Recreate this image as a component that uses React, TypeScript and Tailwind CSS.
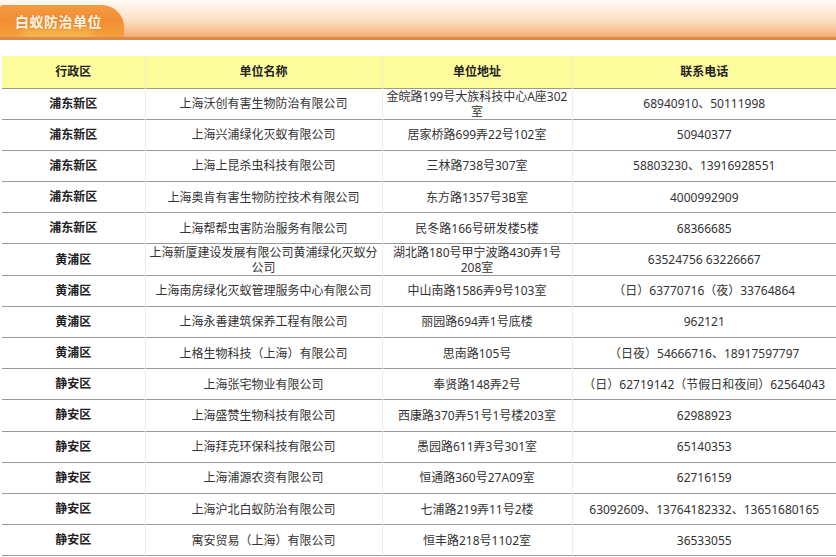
import React from 'react'

type Row = { district: string; name: string; address: string; phone: string }

const ROWS: Row[] = [
  { district: '浦东新区', name: '上海沃创有害生物防治有限公司', address: '金皖路199号大族科技中心A座302室', phone: '68940910、50111998' },
  { district: '浦东新区', name: '上海兴浦绿化灭蚁有限公司', address: '居家桥路699弄22号102室', phone: '50940377' },
  { district: '浦东新区', name: '上海上昆杀虫科技有限公司', address: '三林路738号307室', phone: '58803230、13916928551' },
  { district: '浦东新区', name: '上海奥肯有害生物防控技术有限公司', address: '东方路1357号3B室', phone: '4000992909' },
  { district: '浦东新区', name: '上海帮帮虫害防治服务有限公司', address: '民冬路166号研发楼5楼', phone: '68366685' },
  { district: '黄浦区', name: '上海新厦建设发展有限公司黄浦绿化灭蚁分公司', address: '湖北路180号甲宁波路430弄1号208室', phone: '63524756 63226667' },
  { district: '黄浦区', name: '上海南房绿化灭蚁管理服务中心有限公司', address: '中山南路1586弄9号103室', phone: '（日）63770716（夜）33764864' },
  { district: '黄浦区', name: '上海永善建筑保养工程有限公司', address: '丽园路694弄1号底楼', phone: '962121' },
  { district: '黄浦区', name: '上格生物科技（上海）有限公司', address: '思南路105号', phone: '（日夜）54666716、18917597797' },
  { district: '静安区', name: '上海张宅物业有限公司', address: '奉贤路148弄2号', phone: '（日）62719142（节假日和夜间）62564043' },
  { district: '静安区', name: '上海盛赞生物科技有限公司', address: '西康路370弄51号1号楼203室', phone: '62988923' },
  { district: '静安区', name: '上海拜克环保科技有限公司', address: '愚园路611弄3号301室', phone: '65140353' },
  { district: '静安区', name: '上海浦源农资有限公司', address: '恒通路360号27A09室', phone: '62716159' },
  { district: '静安区', name: '上海沪北白蚁防治有限公司', address: '七浦路219弄11号2楼', phone: '63092609、13764182332、13651680165' },
  { district: '静安区', name: '寓安贸易（上海）有限公司', address: '恒丰路218号1102室', phone: '36533055' },
]

const font = { fontFamily: '"Noto Sans", "Noto Sans CJK SC", sans-serif' }

export default function App() {
  return (
    <div className="w-[836px] h-[557px] overflow-hidden bg-white" style={font}>
      {/* Title bar */}
      <div className="h-[40px] bg-gradient-to-b from-[#fefaf5] via-[#fde3c8] to-[#f5ad72] border-b-[3px] border-[#d98a4c] flex items-end">
        <div className="relative w-[124px] h-[32px] rounded-tr-[22px] rounded-tl-[3px] bg-gradient-to-b from-[#f39a42] via-[#f28e34] to-[#f3a03a] flex items-center pl-[15px] overflow-hidden">
          <div className="absolute left-[20px] right-[30px] bottom-[-6px] h-[14px] rounded-full bg-[#f9c45a] opacity-60 blur-[4px]" />
          <span className="relative text-[14px] font-bold text-[#fff6e6] tracking-[0.5px] [text-shadow:0_0_2px_#e07a20]">白蚁防治单位</span>
        </div>
      </div>

      {/* Table */}
      <div className="pt-[16px] pl-[2px]">
        <table className="table-fixed border-collapse w-[834px] text-[12px] text-[#333]">
          <colgroup>
            <col className="w-[143px]" />
            <col className="w-[237px]" />
            <col className="w-[190px]" />
            <col className="w-[264px]" />
          </colgroup>
          <thead>
            <tr className="h-[32px] bg-[#fdfc9c] border-b border-[#9a9a8a]">
              {['行政区', '单位名称', '单位地址', '联系电话'].map(h => (
                <th key={h} className="font-bold text-[#222] text-center border-l border-[#f2f0c8] first:border-l-0">
                  {h}
                </th>
              ))}
            </tr>
          </thead>
          <tbody>
            {ROWS.map((r, i) => (
              <tr key={i} className="h-[31.2px] border-b border-[#9a9a9a]">
                <td className="font-bold text-[#222] text-center">{r.district}</td>
                <td className="text-center px-[3px] leading-[15px] border-l border-[#ececec]">{r.name}</td>
                <td className="text-center px-[3px] leading-[15px] border-l border-[#ececec]">{r.address}</td>
                <td className="text-center px-[3px] leading-[15px] border-l border-[#ececec] whitespace-nowrap">{r.phone}</td>
              </tr>
            ))}
          </tbody>
        </table>
      </div>
    </div>
  )
}
